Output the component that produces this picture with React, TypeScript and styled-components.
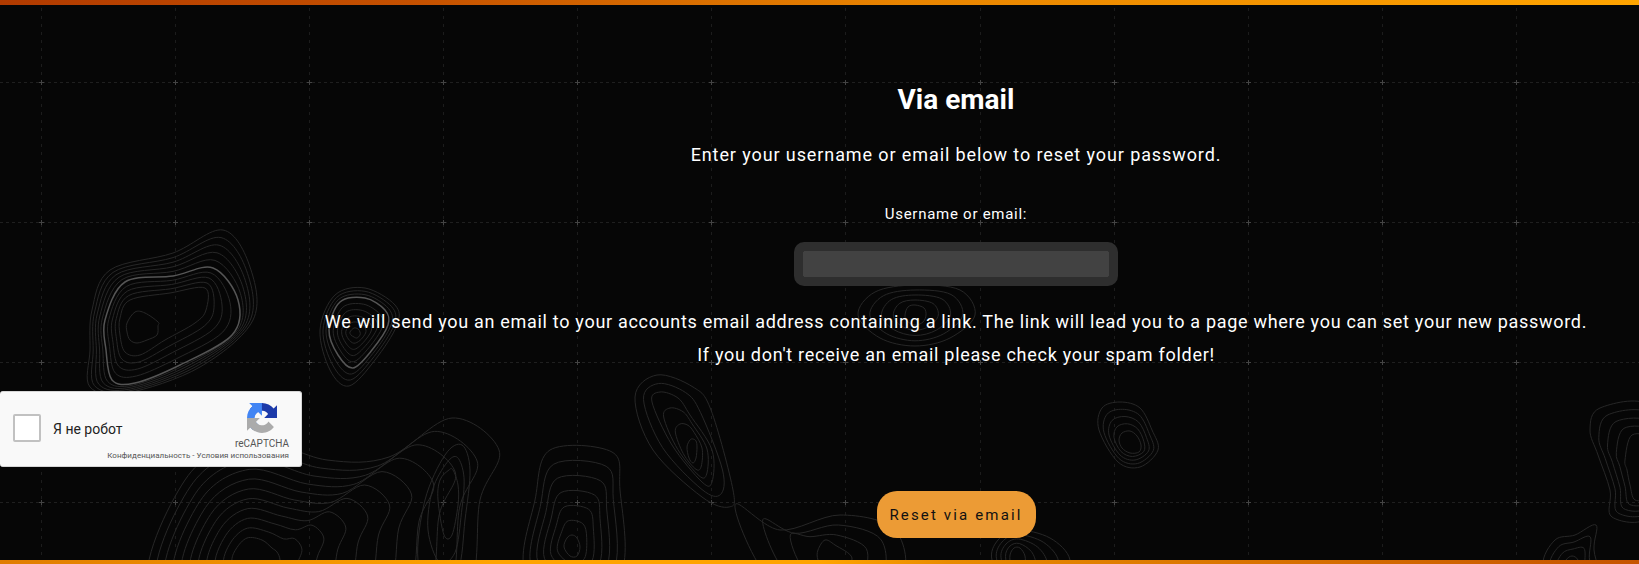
import styled, { createGlobalStyle } from 'styled-components';

type Point = [number, number];

interface Contour {
  rings: Point[][];
  steps: number[];
  bright?: number;
}

const GlobalStyle = createGlobalStyle`
  html, body {
    margin: 0;
    padding: 0;
    background: #060606;
  }
`;

const Page = styled.div`
  position: relative;
  width: 1639px;
  height: 564px;
  overflow: hidden;
  display: flex;
  flex-direction: column;
  background: #060606;
  font-family: Roboto, "Liberation Sans", sans-serif;
  color: #fff;
`;

const Bar = styled.div<{ $flip?: boolean }>`
  position: relative;
  flex: none;
  height: ${(p) => (p.$flip ? '4px' : '5px')};
  background: ${(p) => (p.$flip
    ? 'linear-gradient(90deg, #e07c00 0%, #ffa400 30%, #ffa400 50%, #e88a00 58%, #c65400 100%)'
    : 'linear-gradient(90deg, #b03a00 0%, #c45000 25%, #e88400 55%, #ffa400 100%)')};
`;

const Backdrop = styled.svg`
  position: absolute;
  left: 0;
  top: 0;
`;

const Body = styled.div`
  position: relative;
  flex: 1;
  display: flex;
`;

const Captcha = styled.div`
  flex: none;
  align-self: flex-start;
  box-sizing: border-box;
  width: 302px;
  height: 76px;
  margin-top: 386px;
  padding: 0 12px 0 13px;
  display: grid;
  grid-template-columns: 1fr auto;
  background: #f9f9f9;
  border: 1px solid #d6d6d6;
  border-left: none;
  border-radius: 3px;
  color: #222;
  font-family: Roboto, "Liberation Sans", sans-serif;
`;

const CheckRow = styled.label`
  display: flex;
  align-items: center;
  gap: 12px;
  font-size: 14px;
  height: 73px;
`;

const Check = styled.span`
  box-sizing: border-box;
  width: 28px;
  height: 28px;
  margin-top: -1px;
  background: #fff;
  border: 2px solid #c1c1c1;
  border-radius: 2px;
`;

const Brand = styled.div`
  display: flex;
  flex-direction: column;
  align-items: center;
  padding-top: 11px;
  font-size: 10px;
  color: #555;
  svg {
    margin-bottom: 5px;
  }
`;

const Legal = styled.div`
  grid-column: 1 / -1;
  margin-top: -15px;
  text-align: right;
  font-size: 8px;
  line-height: 10px;
  letter-spacing: 0.03px;
  color: #555;
`;

const Main = styled.main`
  position: relative;
  flex: 1;
  padding: 78px 29px 0 0;
  display: flex;
  flex-direction: column;
  align-items: center;
`;

const Title = styled.h1`
  margin: 0;
  font-size: 28px;
  line-height: 34px;
  font-weight: 700;
`;

const Lead = styled.p<{ $gap?: number; $spacing: number }>`
  margin: ${(p) => p.$gap ?? 0}px 0 0;
  font-size: 18px;
  line-height: 33px;
  white-space: nowrap;
  letter-spacing: ${(p) => p.$spacing}px;
`;

const Label = styled.label`
  margin-top: 31px;
  font-size: 15px;
  line-height: 24px;
  letter-spacing: 0.73px;
`;

const Field = styled.input`
  box-sizing: border-box;
  width: 324px;
  height: 44px;
  margin-top: 16px;
  border: 9px solid #2e2e2e;
  border-radius: 10px;
  background: #424242;
  background-clip: padding-box;
  outline: none;
`;

const Submit = styled.button`
  width: 159px;
  height: 47px;
  margin-top: 120px;
  padding: 0;
  border: none;
  border-radius: 20px;
  background: #ec9b35;
  color: #111;
  font-family: inherit;
  font-size: 15px;
  letter-spacing: 2.15px;
`;

const contours: Contour[] = [
  {
    rings: [
      [[92, 310], [110, 270], [173, 253], [223, 230], [250, 267], [253, 320], [200, 367], [127, 393], [90, 387], [90, 350]],
      [[105, 320], [125, 282], [173, 276], [213, 268], [238, 300], [232, 335], [180, 365], [135, 383], [112, 380], [106, 350]],
      [[120, 318], [130, 300], [170, 293], [205, 288], [206, 310], [195, 323], [165, 340], [140, 355], [125, 352], [120, 335]],
      [[127, 323], [135, 312], [145, 313], [158, 322], [158, 326], [157, 335], [147, 340], [137, 343], [130, 340], [127, 332]],
    ],
    steps: [5, 4, 1],
    bright: 5,
  },
  {
    rings: [
      [[320, 330], [335, 295], [365, 288], [395, 305], [397, 325], [375, 360], [349, 386], [330, 370]],
      [[329, 330], [340, 302], [365, 298], [385, 310], [388, 325], [372, 350], [353, 368], [338, 355]],
      [[350, 332], [354, 328], [358, 329], [360, 332], [360, 335], [357, 338], [354, 337], [351, 335]],
    ],
    steps: [3, 5],
    bright: 3,
  },
  {
    rings: [
      [[657, 375], [635, 397], [653, 450], [702, 497], [729, 507], [733, 490], [711, 410], [693, 387]],
      [[660, 392], [652, 402], [672, 445], [702, 482], [712, 482], [712, 450], [690, 415], [678, 398]],
      [[690, 440], [687, 447], [689, 458], [693, 463], [696, 458], [697, 447], [696, 441], [693, 439]],
    ],
    steps: [2, 3],
  },
  {
    rings: [
      [[150, 590], [185, 480], [250, 440], [327, 460], [389, 457], [452, 418], [499, 450], [480, 500], [468, 590], [400, 620], [260, 620]],
      [[232, 562], [236, 549], [247, 538], [262, 540], [272, 548], [277, 552], [280, 560], [277, 570], [270, 578], [258, 582], [240, 578]],
    ],
    steps: [10],
  },
  {
    rings: [
      [[418, 560], [425, 500], [445, 455], [462, 445], [470, 470], [465, 520], [458, 570], [435, 590]],
      [[438, 500], [440, 480], [449, 470], [453, 470], [458, 485], [458, 505], [452, 535], [444, 535]],
    ],
    steps: [2],
  },
  {
    rings: [
      [[525, 570], [535, 500], [550, 450], [612, 452], [620, 490], [622, 570], [575, 600]],
      [[564, 547], [567, 538], [572, 535], [577, 538], [580, 547], [577, 556], [570, 556]],
    ],
    steps: [6],
  },
  {
    rings: [
      [[735, 505], [780, 530], [840, 515], [895, 530], [900, 580], [830, 600], [770, 580]],
      [[818, 550], [825, 540], [835, 545], [852, 558], [840, 575], [825, 572], [818, 560]],
    ],
    steps: [3],
  },
  {
    rings: [
      [[992, 560], [998, 540], [1017, 530], [1050, 538], [1070, 560], [1060, 590], [1010, 590]],
      [[1010, 555], [1014, 548], [1020, 548], [1025, 556], [1024, 566], [1016, 570], [1011, 565]],
    ],
    steps: [4],
  },
  {
    rings: [
      [[1099, 430], [1102, 408], [1120, 402], [1140, 408], [1152, 430], [1158, 450], [1140, 467], [1118, 462]],
      [[1119, 440], [1122, 433], [1130, 431], [1137, 436], [1141, 445], [1139, 452], [1130, 453], [1122, 448]],
    ],
    steps: [4],
  },
  {
    rings: [
      [[858, 315], [875, 292], [915, 285], [960, 290], [975, 315], [950, 338], [915, 346], [880, 338]],
      [[905, 315], [908, 307], [915, 305], [924, 308], [926, 315], [923, 322], [915, 325], [907, 321]],
    ],
    steps: [4],
  },
  {
    rings: [
      [[1590, 430], [1600, 408], [1650, 405], [1680, 460], [1650, 517], [1612, 517], [1610, 490], [1598, 455]],
      [[1625, 460], [1632, 435], [1655, 440], [1660, 465], [1650, 495], [1635, 500], [1630, 485], [1627, 470]],
    ],
    steps: [4],
  },
  {
    rings: [
      [[1543, 565], [1555, 540], [1575, 535], [1596, 525], [1594, 550], [1600, 590], [1560, 595]],
      [[1562, 570], [1566, 560], [1572, 556], [1578, 560], [1580, 572], [1575, 582], [1565, 580]],
    ],
    steps: [3],
  },
];

const smoothPath = (points: Point[]) => {
  const n = points.length;
  const at = (i: number) => points[(i + n) % n];
  let d = `M${at(0)[0].toFixed(1)} ${at(0)[1].toFixed(1)}`;
  for (let i = 0; i < n; i += 1) {
    const [p0, p1, p2, p3] = [at(i - 1), at(i), at(i + 1), at(i + 2)];
    const c1 = [p1[0] + (p2[0] - p0[0]) / 6, p1[1] + (p2[1] - p0[1]) / 6];
    const c2 = [p2[0] - (p3[0] - p1[0]) / 6, p2[1] - (p3[1] - p1[1]) / 6];
    d += `C${c1[0].toFixed(1)} ${c1[1].toFixed(1)} ${c2[0].toFixed(1)} ${c2[1].toFixed(1)} ${p2[0].toFixed(1)} ${p2[1].toFixed(1)}`;
  }
  return `${d}Z`;
};

const contourLines = ({ rings, steps, bright }: Contour) => {
  const lines: { d: string; bright: boolean }[] = [];
  let index = 0;
  steps.forEach((count, s) => {
    for (let k = 0; k <= count; k += 1) {
      if (k < count || s === steps.length - 1) {
        const t = k / count;
        const ring = rings[s].map(([x, y], i): Point => [
          x + (rings[s + 1][i][0] - x) * t,
          y + (rings[s + 1][i][1] - y) * t,
        ]);
        lines.push({ d: smoothPath(ring), bright: index === bright });
        index += 1;
      }
    }
  });
  return lines;
};

const gridX = [41, 175, 309, 443, 577, 711, 845, 980, 1114, 1248, 1382, 1516];
const gridY = [82, 222, 362, 502];

const Background = () => (
  <Backdrop width="1639" height="564" viewBox="0 0 1639 564" fill="none">
    {gridX.map((x) => (
      <line key={x} x1={x + 0.5} y1="0" x2={x + 0.5} y2="564" stroke="#1c1c1c" strokeDasharray="3 5" />
    ))}
    {gridY.map((y) => (
      <line key={y} x1="0" y1={y + 0.5} x2="1639" y2={y + 0.5} stroke="#1f1f1f" strokeDasharray="3 3" />
    ))}
    {gridX.map((x) => gridY.map((y) => (
      <path key={`${x}-${y}`} d={`M${x - 2} ${y + 0.5}h5M${x + 0.5} ${y - 2}v5`} stroke="#444" />
    )))}
    {contours.flatMap(contourLines).map((line, i) => (
      <path key={i} d={line.d} stroke={line.bright ? '#555' : '#272727'} strokeWidth={line.bright ? 1.5 : 1} />
    ))}
  </Backdrop>
);

const RecaptchaLogo = () => (
  <svg width="30" height="30" viewBox="0 0 64 64">
    <path fill="#1c3aa9" d="M64 31.955l-.033-1.37V4.687l-7.16 7.16C50.948 4.674 42.033.093 32.05.093c-10.4 0-19.622 4.96-25.458 12.64l11.736 11.86a15.55 15.55 0 0 1 4.754-5.334c2.05-1.6 4.952-2.906 8.968-2.906.485 0 .86.057 1.135.163 4.976.393 9.288 3.14 11.828 7.124l-8.307 8.307c10.522-.04 22.4-.066 27.295.004" />
    <path fill="#4285f4" d="M31.9.002l-1.37.033H4.632l7.16 7.16C4.62 13.055.037 21.97.037 31.95c0 10.4 4.96 19.622 12.64 25.458l11.86-11.736a15.55 15.55 0 0 1-5.334-4.754c-1.6-2.05-2.906-4.952-2.906-8.968 0-.485.057-.86.163-1.135.393-4.976 3.14-9.288 7.124-11.828l8.307 8.307c-.04-10.522-.066-22.4.004-27.295" />
    <path fill="#ababab" d="M.002 31.958l.033 1.37v25.898l7.16-7.16c5.86 7.173 14.774 11.754 24.755 11.754 10.4 0 19.622-4.96 25.458-12.64l-11.736-11.86a15.55 15.55 0 0 1-4.754 5.334c-2.05 1.6-4.952 2.906-8.968 2.906-.485 0-.86-.057-1.135-.163-4.976-.393-9.288-3.14-11.828-7.124l8.307-8.307c-10.522.04-22.4.066-27.295-.004" />
  </svg>
);

const App = () => (
  <Page>
    <GlobalStyle />
    <Background />
    <Bar />
    <Body>
      <Captcha>
        <CheckRow>
          <Check />
          Я не робот
        </CheckRow>
        <Brand>
          <RecaptchaLogo />
          reCAPTCHA
        </Brand>
        <Legal>Конфиденциальность - Условия использования</Legal>
      </Captcha>
      <Main>
        <Title>Via email</Title>
        <Lead $gap={21} $spacing={0.9}>Enter your username or email below to reset your password.</Lead>
        <Label>Username or email:</Label>
        <Field />
        <Lead $gap={19} $spacing={0.7}>We will send you an email to your accounts email address containing a link. The link will lead you to a page where you can set your new password.</Lead>
        <Lead $spacing={0.72}>If you don't receive an email please check your spam folder!</Lead>
        <Submit>Reset via email</Submit>
      </Main>
    </Body>
    <Bar $flip />
  </Page>
);

export default App;
